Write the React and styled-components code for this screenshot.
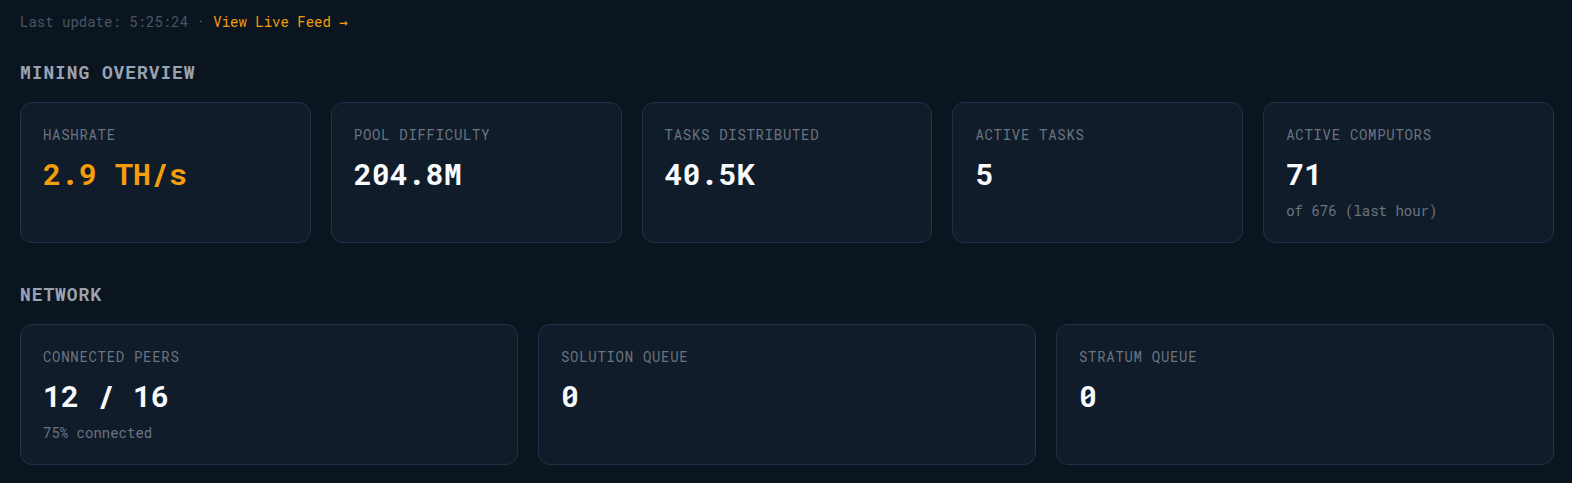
import React from 'react';
import styled, { createGlobalStyle } from 'styled-components';

const GlobalStyle = createGlobalStyle`
  html, body {
    margin: 0;
    padding: 0;
    background: #0a151f;
  }
  body {
    font-family: "Roboto Mono", "DejaVu Sans Mono", "Liberation Mono", monospace;
    -webkit-font-smoothing: antialiased;
  }
`;

const Page = styled.div`
  padding: 12px 18px 20px 20px;
  min-height: 483px;
  box-sizing: border-box;
`;

const UpdateBar = styled.div`
  font-size: 14px;
  line-height: 20px;
  color: #4a5563;
`;

const Dot = styled.span`
  color: #6b7480;
`;

const FeedLink = styled.a`
  color: #f59e0b;
  text-decoration: none;
  cursor: pointer;
`;

const Section = styled.section`
  margin-top: ${p => p.$top}px;
`;

const SectionTitle = styled.h2`
  margin: 0 0 16px;
  font-size: 18px;
  line-height: 28px;
  font-weight: 700;
  letter-spacing: 0.05em;
  text-transform: uppercase;
  color: #9aa3b2;
`;

const CardGrid = styled.div`
  display: grid;
  grid-template-columns: repeat(${p => p.$cols}, 1fr);
  gap: 20px;
`;

const Card = styled.div`
  background: #111c2b;
  border: 1px solid #1e3349;
  border-radius: 12px;
  padding: 22px 22px 21px;
`;

const Label = styled.div`
  font-size: 14px;
  line-height: 20px;
  letter-spacing: 0.05em;
  text-transform: uppercase;
  color: #6b7480;
`;

const Value = styled.div`
  margin-top: 11px;
  font-size: 30px;
  line-height: 36px;
  font-weight: 700;
  color: ${p => (p.$accent ? '#f59e0b' : '#f8fafc')};
`;

const Sub = styled.div`
  margin-top: 9px;
  font-size: 14px;
  line-height: 20px;
  color: #6b7480;
`;

const mining = [
  { label: 'Hashrate', value: '2.9 TH/s', accent: true },
  { label: 'Pool Difficulty', value: '204.8M' },
  { label: 'Tasks Distributed', value: '40.5K' },
  { label: 'Active Tasks', value: '5' },
  { label: 'Active Computors', value: '71', sub: 'of 676 (last hour)' },
];

const network = [
  { label: 'Connected Peers', value: '12 / 16', sub: '75% connected' },
  { label: 'Solution Queue', value: '0' },
  { label: 'Stratum Queue', value: '0' },
];

const StatCard = ({ label, value, sub, accent }) => (
  <Card>
    <Label>{label}</Label>
    <Value $accent={accent}>{value}</Value>
    {sub && <Sub>{sub}</Sub>}
  </Card>
);

const App = () => (
  <>
    <GlobalStyle />
    <Page>
      <UpdateBar>
        Last update: 5:25:24 <Dot>·</Dot> <FeedLink>View Live Feed →</FeedLink>
      </UpdateBar>

      <Section $top={26}>
        <SectionTitle>Mining Overview</SectionTitle>
        <CardGrid $cols={5}>
          {mining.map(s => <StatCard key={s.label} {...s} />)}
        </CardGrid>
      </Section>

      <Section $top={37}>
        <SectionTitle>Network</SectionTitle>
        <CardGrid $cols={3}>
          {network.map(s => <StatCard key={s.label} {...s} />)}
        </CardGrid>
      </Section>
    </Page>
  </>
);

export default App;
